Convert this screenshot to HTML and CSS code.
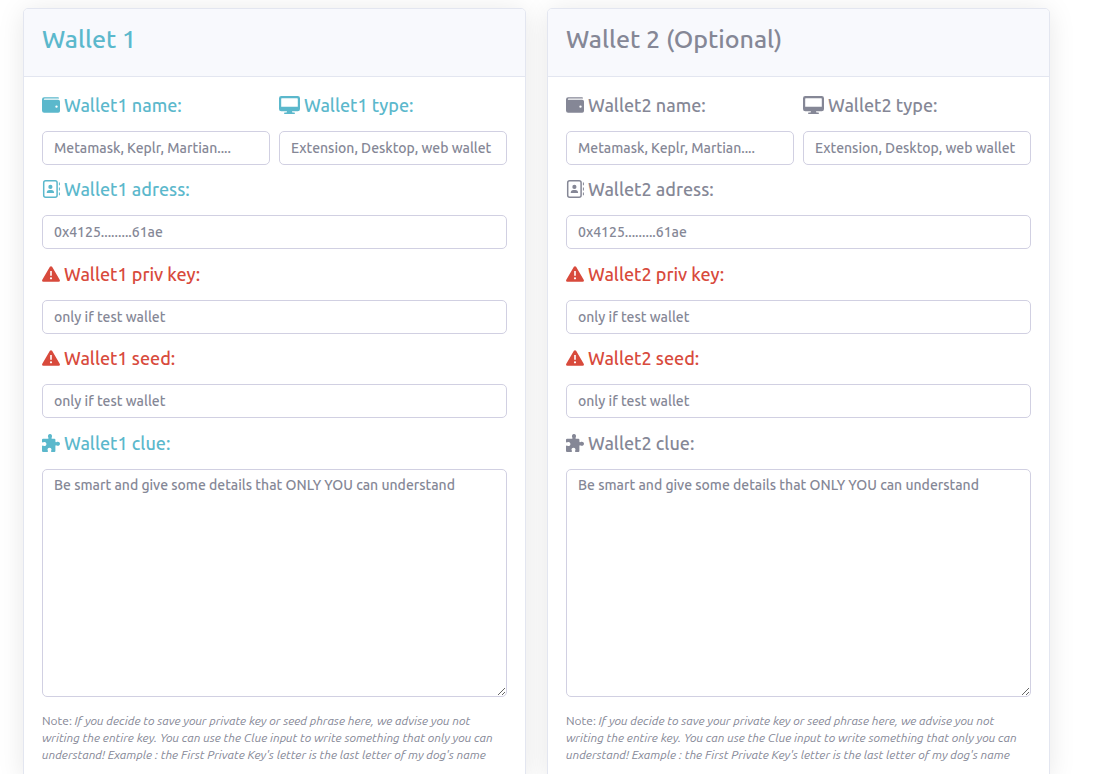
FILE: index.html
```html
<!DOCTYPE html>
<html lang="en">
<head>
<meta charset="utf-8">
<title>Wallets</title>
<link rel="stylesheet" href="styles.css">
</head>
<body>
<svg class="sprite" aria-hidden="true">
  <symbol id="i-wallet" viewBox="0 0 18 18"><path fill-rule="evenodd" d="M2.2 1.2H16Q17 1.2 17 2.2V2.6H2.8Q1.8 2.6 1.8 3.2T2.8 3.8H16.2Q18 3.8 18 5.6V15Q18 16.8 16.2 16.8H2.2Q0 16.8 0 14.6V3.4Q0 1.2 2.2 1.2ZM14.5 9.4a1.2 1.2 0 1 0 0 2.4a1.2 1.2 0 0 0 0-2.4Z"/></symbol>
  <symbol id="i-monitor" viewBox="0 0 21 18"><path fill-rule="evenodd" d="M2.3 0H18.700Q21 0 21 2.300V13Q21 15.200 18.700 15.200H13L13.400 16.400H15.200a.8.8 0 0 1 0 1.600H5.800a.8.8 0 0 1 0-1.600H7.600L8 15.200H2.300Q0 15.200 0 13V2.300Q0 0 2.300 0ZM2.800 2.200Q2.200 2.200 2.200 2.800V10.800H18.800V2.800Q18.800 2.200 18.200 2.200Z"/></symbol>
  <symbol id="i-contact" viewBox="0 0 18 18"><rect x="1.700" y=".8" width="13.400" height="16.400" rx="2" fill="none" stroke="currentColor" stroke-width="1.500"/><circle cx="8.400" cy="6.900" r="2.100"/><path d="M4.700 13Q4.700 10 7.500 10H9.300Q12.100 10 12.100 13ZM16.900 2.500h1v2.700h-1ZM16.900 7.400h1v3h-1ZM16.900 12.600h1v2.700h-1Z"/></symbol>
  <symbol id="i-warning" viewBox="0 0 18 18"><path fill-rule="evenodd" d="M7.900 1.800Q9 .5 10.100 1.800L17.700 14.700Q18.500 16.600 16.600 16.700H1.400Q-.5 16.600.3 14.700ZM8.200 6V10.800H9.800V6ZM9 12.200a1.100 1.100 0 1 0 0 2.200a1.100 1.100 0 0 0 0-2.200Z"/></symbol>
  <symbol id="i-puzzle" viewBox="0 0 18 18"><path d="M6.300 3.400C5.400 2.200 6.200 0 8 0S10.600 2.200 9.700 3.400Q9 4.500 10.100 4.700H12.400Q13.400 4.700 13.400 5.700V7.600Q13.600 8.700 14.600 8C16 7.100 18 7.900 18 9.700S16 12.300 14.600 11.400Q13.600 10.700 13.400 11.800V16.900Q13.400 18 12.400 18H9.700Q8.500 17.800 9.200 16.600C10 15.300 9.200 13.700 7.500 13.700S5 15.300 5.800 16.600Q6.500 17.800 5.300 18H1.100Q0 18 0 16.900V12.200Q.2 11.100 1.400 11.800C2.800 12.600 4.400 11.800 4.400 10S2.800 7.400 1.400 8.200Q.2 8.900 0 7.800V5.800Q0 4.700 1.100 4.700H5.900Q7 4.500 6.300 3.400Z"/></symbol>
</svg>

<main class="wallets">
  <section class="card card-info">
    <header class="card-header"><h2 class="card-title">Wallet 1</h2></header>
    <form class="card-body">
      <div class="group">
        <div class="pair">
          <div class="field">
            <label class="label" for="w1-name"><svg class="icon"><use href="#i-wallet"/></svg>Wallet1 name:</label>
            <input class="control" id="w1-name" type="text" placeholder="Metamask, Keplr, Martian....">
          </div>
          <div class="field">
            <label class="label" for="w1-type"><svg class="icon icon-wide"><use href="#i-monitor"/></svg>Wallet1 type:</label>
            <input class="control" id="w1-type" type="text" placeholder="Extension, Desktop, web wallet">
          </div>
        </div>
        <div class="field">
          <label class="label" for="w1-address"><svg class="icon"><use href="#i-contact"/></svg>Wallet1 adress:</label>
          <input class="control" id="w1-address" type="text" placeholder="0x4125.........61ae">
        </div>
      </div>
      <div class="group">
        <div class="field">
          <label class="label label-danger" for="w1-key"><svg class="icon"><use href="#i-warning"/></svg>Wallet1 priv key:</label>
          <input class="control" id="w1-key" type="text" placeholder="only if test wallet">
        </div>
        <div class="field">
          <label class="label label-danger" for="w1-seed"><svg class="icon"><use href="#i-warning"/></svg>Wallet1 seed:</label>
          <input class="control" id="w1-seed" type="text" placeholder="only if test wallet">
        </div>
      </div>
      <div class="field">
        <label class="label" for="w1-clue"><svg class="icon"><use href="#i-puzzle"/></svg>Wallet1 clue:</label>
        <textarea class="control control-area" id="w1-clue" placeholder="Be smart and give some details that ONLY YOU can understand"></textarea>
      </div>
      <p class="note">Note: <em>If you decide to save your private key or seed phrase here, we advise you not writing the entire key. You can use the Clue input to write something that only you can understand! Example : the First Private Key's letter is the last letter of my dog's name</em></p>
    </form>
  </section>

  <section class="card">
    <header class="card-header"><h2 class="card-title">Wallet 2 (Optional)</h2></header>
    <form class="card-body">
      <div class="group">
        <div class="pair">
          <div class="field">
            <label class="label" for="w2-name"><svg class="icon"><use href="#i-wallet"/></svg>Wallet2 name:</label>
            <input class="control" id="w2-name" type="text" placeholder="Metamask, Keplr, Martian....">
          </div>
          <div class="field">
            <label class="label" for="w2-type"><svg class="icon icon-wide"><use href="#i-monitor"/></svg>Wallet2 type:</label>
            <input class="control" id="w2-type" type="text" placeholder="Extension, Desktop, web wallet">
          </div>
        </div>
        <div class="field">
          <label class="label" for="w2-address"><svg class="icon"><use href="#i-contact"/></svg>Wallet2 adress:</label>
          <input class="control" id="w2-address" type="text" placeholder="0x4125.........61ae">
        </div>
      </div>
      <div class="group">
        <div class="field">
          <label class="label label-danger" for="w2-key"><svg class="icon"><use href="#i-warning"/></svg>Wallet2 priv key:</label>
          <input class="control" id="w2-key" type="text" placeholder="only if test wallet">
        </div>
        <div class="field">
          <label class="label label-danger" for="w2-seed"><svg class="icon"><use href="#i-warning"/></svg>Wallet2 seed:</label>
          <input class="control" id="w2-seed" type="text" placeholder="only if test wallet">
        </div>
      </div>
      <div class="field">
        <label class="label" for="w2-clue"><svg class="icon"><use href="#i-puzzle"/></svg>Wallet2 clue:</label>
        <textarea class="control control-area" id="w2-clue" placeholder="Be smart and give some details that ONLY YOU can understand"></textarea>
      </div>
      <p class="note">Note: <em>If you decide to save your private key or seed phrase here, we advise you not writing the entire key. You can use the Clue input to write something that only you can understand! Example : the First Private Key's letter is the last letter of my dog's name</em></p>
    </form>
  </section>
</main>
</body>
</html>
```
FILE: styles.css
```css
*, *::before { box-sizing: border-box; }

html { scrollbar-width: none; }

body {
  margin: 0;
  background: #fff;
  color: #858796;
  font-family: Ubuntu, "Noto Sans", sans-serif;
  font-size: 14px;
}

.sprite { display: none; }

.wallets {
  display: grid;
  grid-template-columns: 1fr 1fr;
  gap: 21px;
  padding: 8px 58px 24px 23px;
  isolation: isolate;
}

.card {
  position: relative;
  min-width: 0;
  border: 1px solid #e3e6f0;
  border-radius: 5px;
  background: #fff;
}

/* Shadows sit beneath both cards so neither darkens its neighbour. */
.card::before {
  content: "";
  position: absolute;
  inset: 0;
  z-index: -1;
  border-radius: 5px;
  box-shadow: 0 2px 28px rgba(0, 0, 0, 0.1);
}

.card-header {
  padding: 12px 18px 18px;
  border-bottom: 1px solid #e3e6f0;
  border-radius: 4px 4px 0 0;
  background: #f8f9fd;
}

.card-title {
  margin: 0;
  font-size: 25px;
  line-height: 37px;
  font-weight: 500;
}

.card-info .card-title,
.card-info .label { color: #5bb8cc; }

.card-body {
  display: flex;
  flex-direction: column;
  gap: 13px;
  padding: 16px 18px;
}

.group {
  display: flex;
  flex-direction: column;
  gap: 12px;
}

.pair {
  display: grid;
  grid-template-columns: 1fr 1fr;
  gap: 9px;
}

.field {
  display: flex;
  flex-direction: column;
  gap: 14px;
  min-width: 0;
}

.label {
  display: flex;
  align-items: center;
  gap: 4px;
  font-size: 18px;
  font-weight: 500;
  line-height: 24px;
}

.card .label-danger { color: #d84a3c; }

.icon {
  flex: none;
  width: 18px;
  height: 18px;
  fill: currentColor;
}

.icon-wide { width: 21px; }

.control {
  width: 100%;
  height: 34px;
  margin: 0;
  padding: 0 11px;
  border: 1px solid #d1d0e2;
  border-radius: 5px;
  background: #fff;
  color: #858796;
  font: 500 14px/20px Ubuntu, "Noto Sans", sans-serif;
}

.control::placeholder {
  color: #858796;
  opacity: 1;
}

.control-area {
  display: block;
  height: 228px;
  padding-top: 5px;
  resize: vertical;
}

.note {
  margin: 2px 0 0;
  font-size: 12px;
  line-height: 17px;
}
```
